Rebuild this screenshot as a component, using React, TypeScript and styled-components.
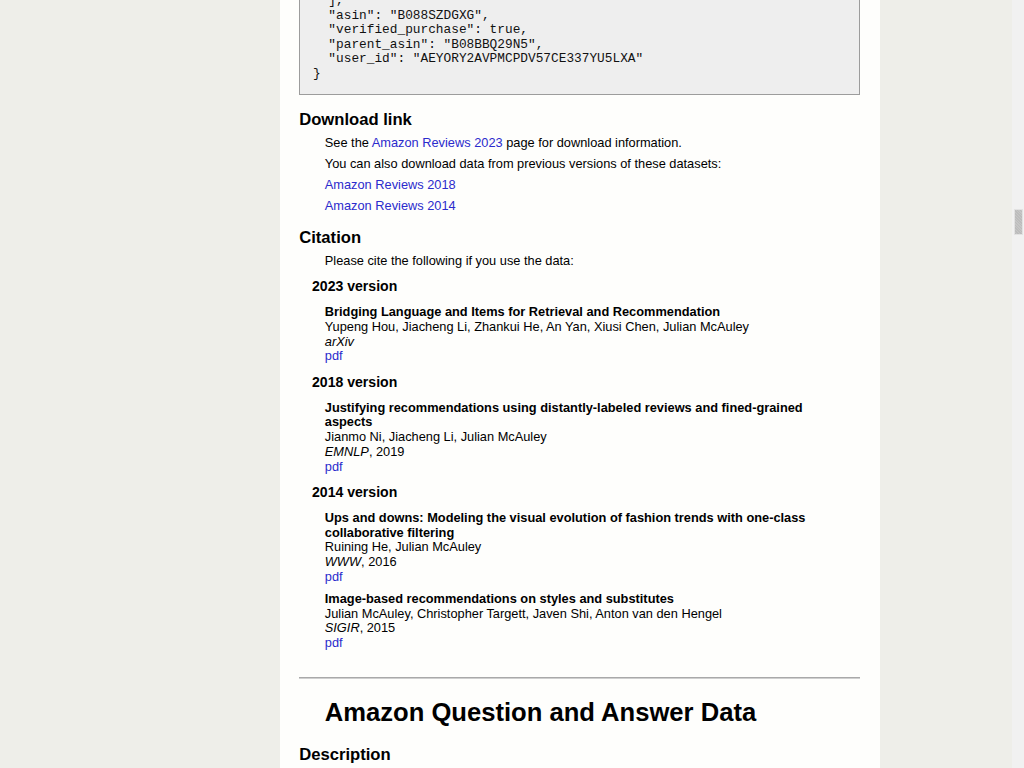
import React, { FC, useLayoutEffect, useRef } from "react";
import styled, { createGlobalStyle } from "styled-components";

const GlobalStyle = createGlobalStyle`
  html, body {
    margin: 0;
    padding: 0;
    height: 100%;
    overflow: hidden;
  }
  body {
    background: #eeeee9;
    font-family: "Liberation Sans", Arial, sans-serif;
    color: #000;
  }
`;

const Frame = styled.div`
  display: flex;
  width: 100vw;
  height: 100vh;
`;

const Viewport = styled.div`
  flex: 1;
  height: 100%;
  overflow: hidden;
`;

const ScrollTrack = styled.div`
  width: 12px;
  height: 100%;
  background: #f1f1f1;
  display: flex;
  justify-content: center;
`;

const ScrollThumb = styled.div`
  margin-top: 209px;
  width: 7px;
  height: 24px;
  background: repeating-linear-gradient(
    45deg,
    #bcbcbc 0px,
    #bcbcbc 1px,
    #c6c6c6 1px,
    #c6c6c6 2px
  );
  border: 1px solid #e2e2e2;
`;

const Column = styled.div`
  width: 600px;
  margin-left: 280px;
  min-height: 100%;
  box-sizing: border-box;
  padding: 40px 20px 200px 19.2px;
  background: #fefefc;
  font-size: 12.8px;
  line-height: 14.7px;
`;

const SectionTitle = styled.h3`
  font-size: 16.64px;
  line-height: 19px;
  font-weight: bold;
  margin: 15px 0 0;
`;

const VersionTitle = styled.h4`
  font-size: 14.08px;
  line-height: 16px;
  font-weight: bold;
  margin: 9.6px 0 11.2px 12.8px;
`;

const DatasetTitle = styled.h2`
  font-size: 25.6px;
  line-height: 29px;
  font-weight: bold;
  margin: 19px 0 18px 25.6px;
`;

const Para = styled.p`
  margin: 6.3px 25.6px;
`;

const Code = styled.pre`
  font-family: "Liberation Mono", "Courier New", monospace;
  font-size: 12.8px;
  line-height: 14.6px;
  margin: 0;
  padding: 12.8px;
  background: #eeeeee;
  border: 1px solid #9c9c9c;
  color: #111;
  white-space: pre;
  overflow: hidden;
`;

const Link = styled.a`
  color: #2b2bcc;
  text-decoration: none;
`;

const Rule = styled.hr`
  height: 0;
  margin: 26px 0 0;
  border: none;
  border-top: 1px solid #a9a9a9;
  border-bottom: 1px solid #cfcfcf;
`;

const Paper = styled.div`
  margin: 7.3px 25.6px;
`;

const PaperTitle = styled.div`
  font-weight: bold;
`;

const Line = styled.div``;

const Venue = styled.span`
  font-style: italic;
`;

type Pub = {
  title: string;
  authors: string;
  venue: string;
  year?: string;
};

const versions: { label: string; papers: Pub[] }[] = [
  {
    label: "2023 version",
    papers: [
      {
        title: "Bridging Language and Items for Retrieval and Recommendation",
        authors:
          "Yupeng Hou, Jiacheng Li, Zhankui He, An Yan, Xiusi Chen, Julian McAuley",
        venue: "arXiv",
      },
    ],
  },
  {
    label: "2018 version",
    papers: [
      {
        title:
          "Justifying recommendations using distantly-labeled reviews and fined-grained aspects",
        authors: "Jianmo Ni, Jiacheng Li, Julian McAuley",
        venue: "EMNLP",
        year: "2019",
      },
    ],
  },
  {
    label: "2014 version",
    papers: [
      {
        title:
          "Ups and downs: Modeling the visual evolution of fashion trends with one-class collaborative filtering",
        authors: "Ruining He, Julian McAuley",
        venue: "WWW",
        year: "2016",
      },
      {
        title: "Image-based recommendations on styles and substitutes",
        authors:
          "Julian McAuley, Christopher Targett, Javen Shi, Anton van den Hengel",
        venue: "SIGIR",
        year: "2015",
      },
    ],
  },
];

const sample = `{
  "sort_timestamp": 1634275259292,
  "rating": 3.0,
  "helpful_votes": 0,
  "title": "Meh",
  "text": "These were lightweight and soft.",
  "images": [
    {
      "attachment_type": "IMAGE"
    }
  ],
  "asin": "B088SZDGXG",
  "verified_purchase": true,
  "parent_asin": "B08BBQ29N5",
  "user_id": "AEYORY2AVPMCPDV57CE337YU5LXA"
}`;

const App: FC = () => {
  const viewRef = useRef<HTMLDivElement>(null);
  const codeRef = useRef<HTMLPreElement>(null);

  // scroll so the sample block ends where the screenshot shows it
  useLayoutEffect(() => {
    const view = viewRef.current;
    const code = codeRef.current;
    if (!view || !code) return;
    const top = view.getBoundingClientRect().top;
    const bottom = code.getBoundingClientRect().bottom;
    view.scrollTop = view.scrollTop + bottom - top - 95.5;
  }, []);

  return (
    <>
      <GlobalStyle />
      <Frame>
        <Viewport ref={viewRef}>
          <Column>
            <SectionTitle>Sample review</SectionTitle>
            <Para>A single review looks like:</Para>
            <Code ref={codeRef}>{sample}</Code>

            <SectionTitle>Download link</SectionTitle>
            <Para>
              See the <Link href="#">Amazon Reviews 2023</Link> page for
              download information.
            </Para>
            <Para>
              You can also download data from previous versions of these
              datasets:
            </Para>
            <Para>
              <Link href="#">Amazon Reviews 2018</Link>
            </Para>
            <Para>
              <Link href="#">Amazon Reviews 2014</Link>
            </Para>

            <SectionTitle>Citation</SectionTitle>
            <Para>Please cite the following if you use the data:</Para>
            {versions.map((v) => (
              <div key={v.label}>
                <VersionTitle>{v.label}</VersionTitle>
                {v.papers.map((p) => (
                  <Paper key={p.title}>
                    <PaperTitle>{p.title}</PaperTitle>
                    <Line>{p.authors}</Line>
                    <Line>
                      <Venue>{p.venue}</Venue>
                      {p.year ? `, ${p.year}` : ""}
                    </Line>
                    <Line>
                      <Link href="#">pdf</Link>
                    </Line>
                  </Paper>
                ))}
              </div>
            ))}

            <Rule />
            <DatasetTitle>Amazon Question and Answer Data</DatasetTitle>
            <SectionTitle>Description</SectionTitle>
            <Para>
              This dataset contains Product Question and Answer data from
              Amazon, totaling around 1.4 million answered questions.
            </Para>
          </Column>
        </Viewport>
        <ScrollTrack>
          <ScrollThumb />
        </ScrollTrack>
      </Frame>
    </>
  );
};

export default App;
